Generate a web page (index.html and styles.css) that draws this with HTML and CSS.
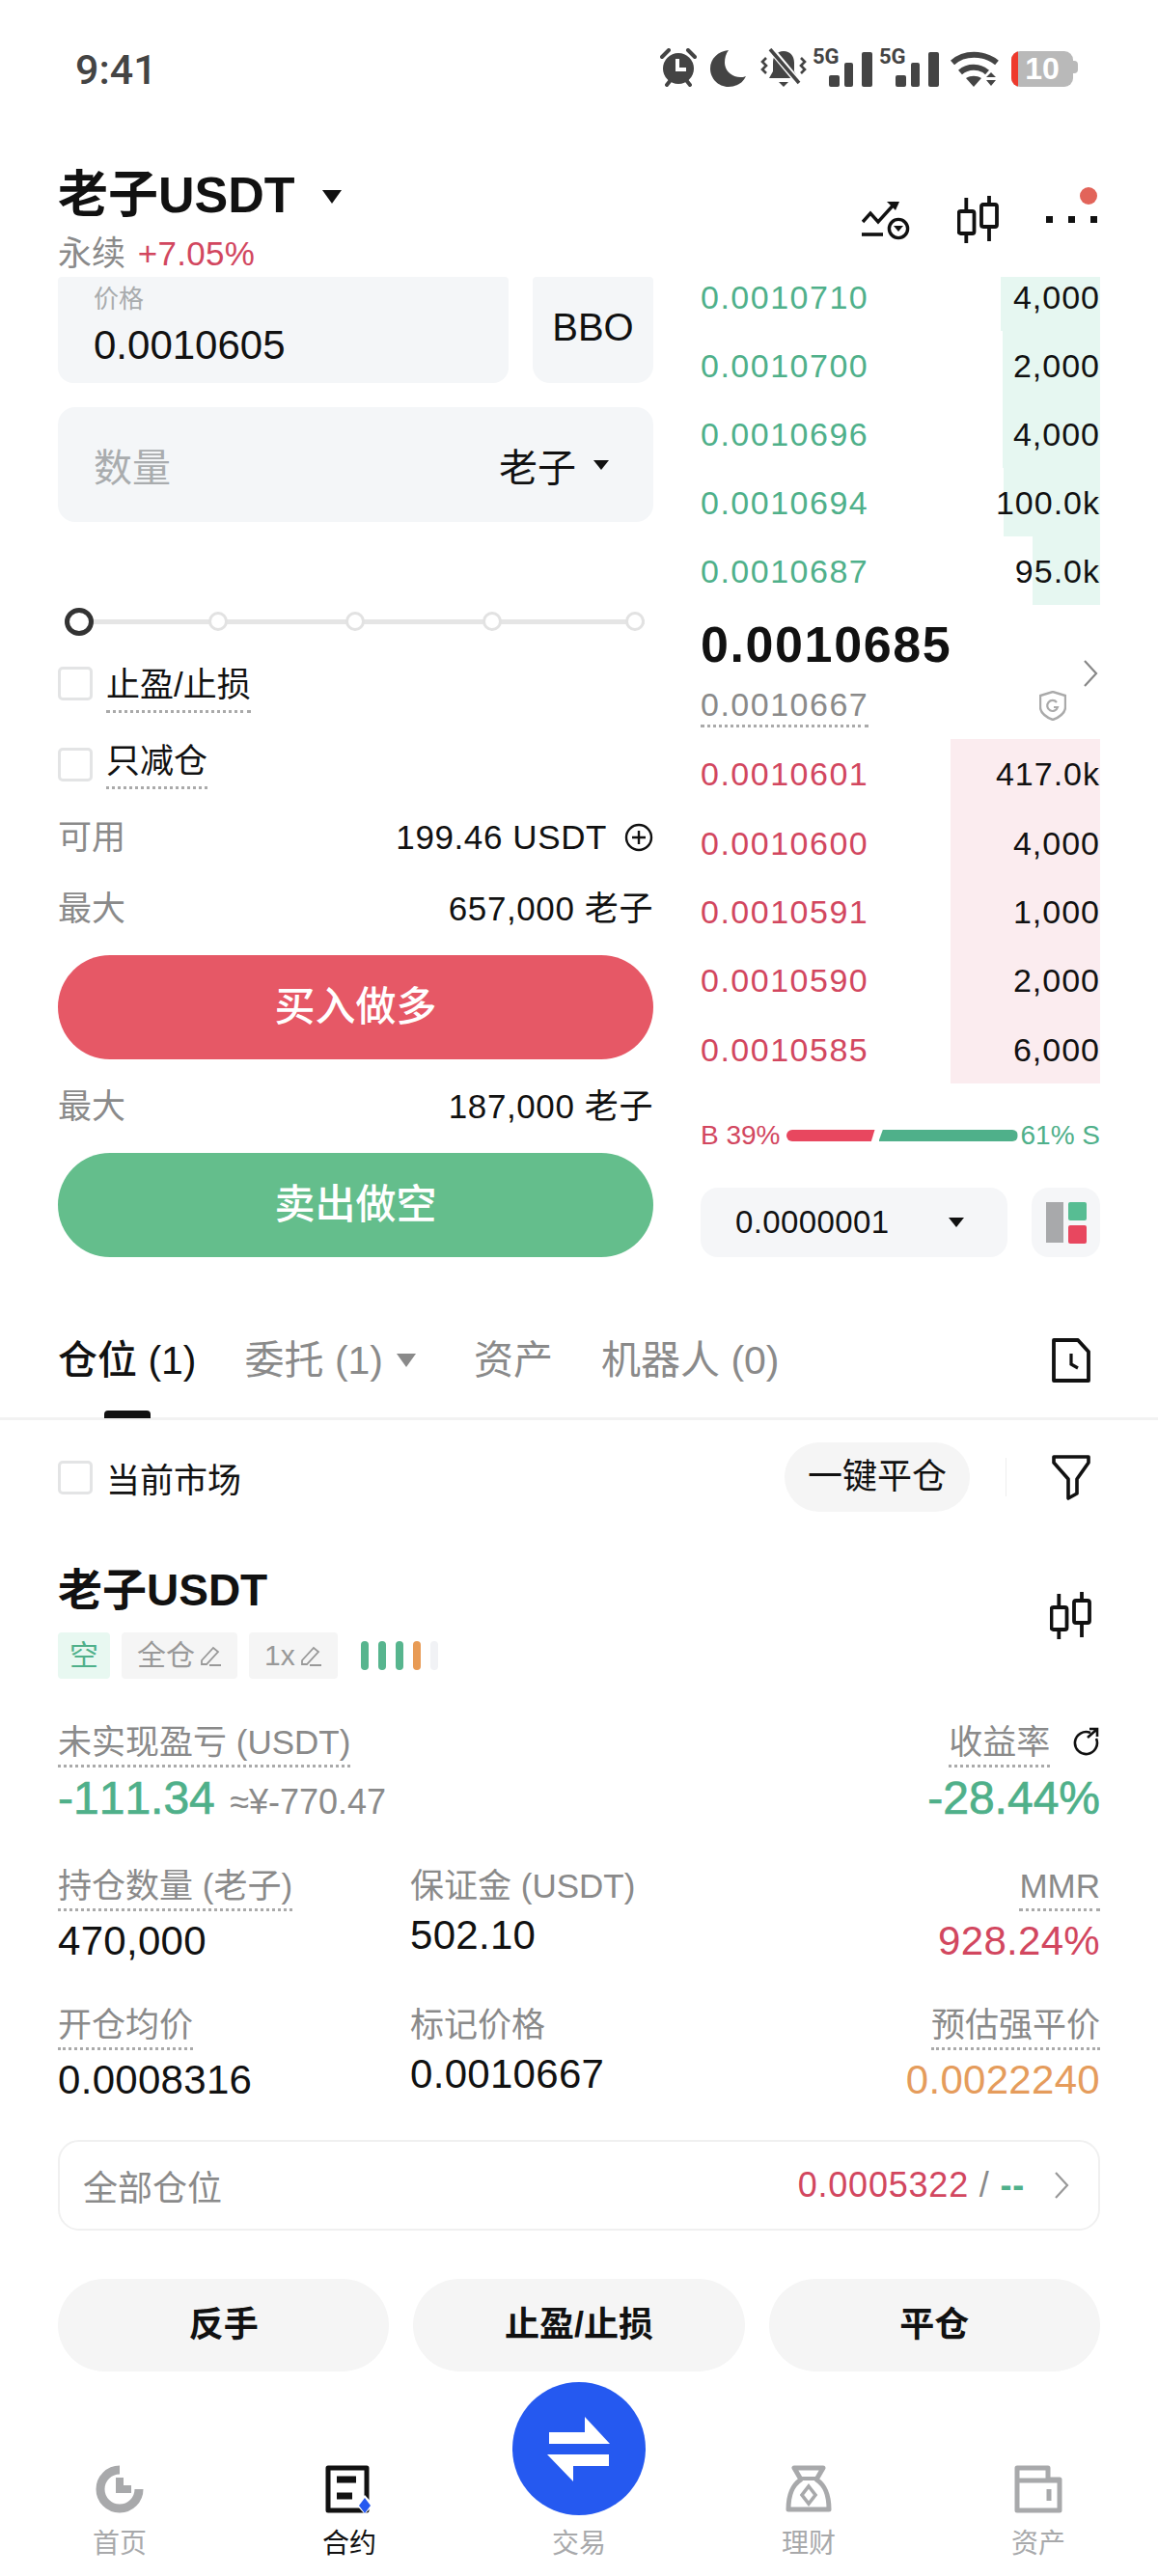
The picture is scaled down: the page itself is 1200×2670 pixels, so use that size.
FILE: index.html
```html
<!DOCTYPE html>
<html lang="zh">
  <head>
    <meta charset="UTF-8" />
    <meta name="viewport" content="width=device-width, initial-scale=1.0" />
    <title>老子USDT</title>
    <link rel="stylesheet" href="styles.css">
  </head>
  <body>
    <svg class="defs" width="0" height="0">
      <symbol id="candles" viewBox="0 0 44 50">
        <path d="M9.3 2V49M33 0V47" fill="none" stroke="#111" stroke-width="3.8" />
        <rect x="1.5" y="16" width="16" height="23" rx="2" fill="#fff" stroke="#111" stroke-width="3.8" />
        <rect x="25" y="9" width="16" height="23" rx="2" fill="#fff" stroke="#111" stroke-width="3.8" />
      </symbol>
      <symbol id="pencil" viewBox="0 0 24 24">
        <path d="M3 17 15 4l5 4-12 13H3zM11 22h12" fill="none" stroke="#999" stroke-width="1.8" />
      </symbol>
    </svg>

    <div class="status-bar">
      <span class="clock">9:41</span>
      <div class="status-icons">
        <svg width="38" height="40" viewBox="0 0 38 40">
          <circle cx="19" cy="21" r="16" fill="#444" />
          <path d="M2 9 9 2M36 9 29 2M7 38l4-5M31 38l-4-5" stroke="#444" stroke-width="4" stroke-linecap="round" />
          <path d="M18 11V22H27" fill="none" stroke="#fff" stroke-width="4" />
        </svg>
        <svg class="moon" width="38" height="38" viewBox="0 0 38 38">
          <path d="M19 0C8 1 0 9 0 19s8 19 19 19c8 0 15-4 18-11-2 1-4 1-6 1-9 0-16-7-16-15 0-5 1-9 4-13z" fill="#444" />
        </svg>
        <svg class="bell" width="50" height="40" viewBox="0 0 50 40">
          <path d="M25 3c-7 0-11 5-11 12v9l-4 7h30l-4-7v-9C36 8 32 3 25 3z" fill="#444" />
          <path d="M20 35h10l-5 5z" fill="#444" />
          <path d="M7 10 3 14l4 4-4 4 4 4M43 10l4 4-4 4 4 4-4 4" fill="none" stroke="#444" stroke-width="2.6" />
          <path d="M11 0 41 36" stroke="#fff" stroke-width="7" />
          <path d="M11 1 41 36" stroke="#444" stroke-width="3.6" />
        </svg>
        <svg class="signal" width="64" height="50" viewBox="0 -8 64 50">
          <text class="net-label" x="0" y="16">5G</text>
          <rect x="17" y="28" width="11" height="12" rx="2" fill="#444" />
          <rect x="33" y="15" width="9" height="25" rx="2" fill="#444" />
          <rect x="51" y="4" width="11" height="36" rx="2" fill="#444" />
        </svg>
        <svg class="signal" width="64" height="50" viewBox="0 -8 64 50">
          <text class="net-label" x="0" y="16">5G</text>
          <rect x="17" y="28" width="11" height="12" rx="2" fill="#444" />
          <rect x="33" y="15" width="9" height="25" rx="2" fill="#444" />
          <rect x="51" y="4" width="11" height="36" rx="2" fill="#444" />
        </svg>
        <svg class="wifi" width="50" height="38" viewBox="0 0 50 38">
          <path d="M2 13C14 2 34 2 48 13" fill="none" stroke="#444" stroke-width="6" />
          <path d="M10 23c8-7 20-7 28 0" fill="none" stroke="#444" stroke-width="6" />
          <path d="M16 29c5-3 11-3 16 0l-8 9z" fill="#444" />
          <path d="M37 28h10l-5-5zM37 31h10l-5 6z" fill="#444" />
        </svg>
        <div class="battery"><span class="battery-level"></span><span class="battery-text">10</span></div>
        <span class="battery-nub"></span>
      </div>
    </div>

    <div class="header">
      <div>
        <div class="pair-row">
          <h1 class="pair">老子USDT</h1>
          <span class="caret caret-lg"></span>
        </div>
        <div class="pair-sub">永续 <span class="red pair-change">+7.05%</span></div>
      </div>
      <div class="header-icons">
        <svg width="50" height="42" viewBox="0 0 50 42">
          <path d="M1 23 9 14l8 9L35 3" fill="none" stroke="#111" stroke-width="3.4" />
          <path d="M26 2H39L35 11z" fill="#111" />
          <path d="M0 36H22" stroke="#111" stroke-width="3.6" />
          <circle cx="38" cy="30" r="9.6" fill="none" stroke="#111" stroke-width="3.4" />
          <path d="M33 27H43L38 33z" fill="#111" />
        </svg>
        <svg class="header-candles" width="44" height="50"><use href="#candles" /></svg>
        <div class="more">
          <span class="more-dot"></span><span class="more-dot"></span><span class="more-dot"></span>
          <span class="notice"></span>
        </div>
      </div>
    </div>

    <div class="trade">
      <div class="order-form">
        <div class="price-row">
          <div class="price-box">
            <div class="price-label">价格</div>
            <div class="price-value">0.0010605</div>
          </div>
          <div class="bbo">BBO</div>
        </div>
        <div class="qty-box">
          <span class="qty-label">数量</span>
          <span class="qty-unit">老子<span class="caret caret-sm"></span></span>
        </div>

        <div class="slider">
          <span class="thumb"></span>
          <span class="stop"></span>
          <span class="stop"></span>
          <span class="stop"></span>
          <span class="stop stop-last"></span>
        </div>

        <div class="check-row">
          <span class="checkbox"></span>
          <span class="dotted">止盈/止损</span>
        </div>
        <div class="check-row check-row-2">
          <span class="checkbox"></span>
          <span class="dotted">只减仓</span>
        </div>

        <div class="info-row info-first">
          <span class="muted">可用</span>
          <span class="info-value">199.46 USDT
            <svg class="plus" width="30" height="30" viewBox="0 0 30 30">
              <circle cx="15" cy="15" r="13" fill="none" stroke="#111" stroke-width="2.4" />
              <path d="M8 15H22M15 8V22" stroke="#111" stroke-width="2.4" />
            </svg>
          </span>
        </div>
        <div class="info-row info-next">
          <span class="muted">最大</span>
          <span class="info-value">657,000 老子</span>
        </div>
        <div class="action action-buy">买入做多</div>
        <div class="info-row info-sell">
          <span class="muted">最大</span>
          <span class="info-value">187,000 老子</span>
        </div>
        <div class="action action-sell">卖出做空</div>
      </div>

      <div class="book">
        <div class="asks">
          <div class="book-row"><span class="depth depth-ask" style="width: 103px"></span><span class="green">0.0010710</span><span class="size">4,000</span></div>
          <div class="book-row"><span class="depth depth-ask" style="width: 101px"></span><span class="green">0.0010700</span><span class="size">2,000</span></div>
          <div class="book-row"><span class="depth depth-ask" style="width: 101px"></span><span class="green">0.0010696</span><span class="size">4,000</span></div>
          <div class="book-row"><span class="depth depth-ask" style="width: 100px"></span><span class="green">0.0010694</span><span class="size">100.0k</span></div>
          <div class="book-row"><span class="depth depth-ask" style="width: 70px"></span><span class="green">0.0010687</span><span class="size">95.0k</span></div>
        </div>

        <div class="mid">
          <div>
            <div class="mid-price">0.0010685</div>
            <div class="mark-price"><span class="mark-dotted">0.0010667</span></div>
          </div>
          <div class="mid-icons">
            <svg class="mid-chevron" width="16" height="28" viewBox="0 0 16 28">
              <path d="M2 1 14 14 2 27" fill="none" stroke="#888" stroke-width="2.2" />
            </svg>
            <svg class="shield" width="28" height="31" viewBox="0 0 28 31">
              <path d="M14 1 27 5V17C27 23 20 28 14 30 8 28 1 23 1 17V5z" fill="none" stroke="#aaa" stroke-width="2.4" />
              <path d="M18 12a5.500 5.500 0 1 0 1 5h-4" fill="none" stroke="#aaa" stroke-width="2.2" />
            </svg>
          </div>
        </div>

        <div class="bids">
          <div class="book-row"><span class="depth depth-bid" style="width: 155px"></span><span class="red">0.0010601</span><span class="size">417.0k</span></div>
          <div class="book-row"><span class="depth depth-bid" style="width: 155px"></span><span class="red">0.0010600</span><span class="size">4,000</span></div>
          <div class="book-row"><span class="depth depth-bid" style="width: 155px"></span><span class="red">0.0010591</span><span class="size">1,000</span></div>
          <div class="book-row"><span class="depth depth-bid" style="width: 155px"></span><span class="red">0.0010590</span><span class="size">2,000</span></div>
          <div class="book-row"><span class="depth depth-bid" style="width: 155px"></span><span class="red">0.0010585</span><span class="size">6,000</span></div>
        </div>

        <div class="ratio">
          <span class="red">B 39%</span>
          <span class="ratio-bar ratio-buy"></span>
          <span class="ratio-bar ratio-sell"></span>
          <span class="green ratio-end">61% S</span>
        </div>

        <div class="tick-row">
          <div class="tick-select">0.0000001<span class="caret caret-sm"></span></div>
          <div class="layout-btn">
            <span class="layout-grey"></span>
            <span class="layout-stack"><span class="layout-green"></span><span class="layout-red"></span></span>
          </div>
        </div>
      </div>
    </div>

    <div class="tabs">
      <div class="tab tab-active">仓位 (1)<span class="tab-ink"></span></div>
      <div class="tab">委托 (1)<span class="caret caret-tab"></span></div>
      <div class="tab">资产</div>
      <div class="tab">机器人 (0)</div>
      <svg class="tab-icon" width="40" height="46" viewBox="0 0 40 46">
        <path d="M2 2H27L38 14V44H2z" fill="none" stroke="#111" stroke-width="3.8" stroke-linejoin="round" />
        <path d="M20 16V27L27 31" fill="none" stroke="#111" stroke-width="3.2" />
      </svg>
    </div>

    <div class="filter-row">
      <span class="checkbox"></span>
      <span class="filter-label">当前市场</span>
      <div class="close-all">一键平仓</div>
      <span class="filter-sep"></span>
      <svg width="40" height="47" viewBox="0 0 40 47">
        <path d="M2 2H38V8L26 25V40L17 45V25L2 8z" fill="none" stroke="#111" stroke-width="3.6" stroke-linejoin="round" />
      </svg>
    </div>

    <div class="position">
      <div class="pos-head">
        <div>
          <div class="pos-title">老子USDT</div>
          <div class="tags">
            <span class="tag tag-side">空</span>
            <span class="tag">全仓<svg class="tag-pencil" width="24" height="24"><use href="#pencil" /></svg></span>
            <span class="tag">1x<svg class="tag-pencil" width="24" height="24"><use href="#pencil" /></svg></span>
            <span class="risk">
              <span class="risk-bar"></span>
              <span class="risk-bar"></span>
              <span class="risk-bar"></span>
              <span class="risk-bar risk-warn"></span>
              <span class="risk-bar risk-off"></span>
            </span>
          </div>
        </div>
        <svg class="pos-candles" width="44" height="50"><use href="#candles" /></svg>
      </div>

      <div class="stats">
        <div class="stat stat-wide">
          <div class="stat-label"><span class="dotted">未实现盈亏 (USDT)</span></div>
          <div class="stat-value stat-big green">-111.34 <span class="stat-approx">≈¥-770.47</span></div>
        </div>
        <div class="stat stat-right">
          <div class="stat-label">
            <span class="dotted">收益率</span>
            <svg class="refresh" width="28" height="30" viewBox="0 0 28 30">
              <path d="M18 6A11.500 11.500 0 1 0 24 12" fill="none" stroke="#111" stroke-width="2.6" />
              <path d="M15 11 24 3M17 2H25V10" fill="none" stroke="#111" stroke-width="2.6" />
            </svg>
          </div>
          <div class="stat-value stat-big green">-28.44%</div>
        </div>

        <div class="stat">
          <div class="stat-label"><span class="dotted">持仓数量 (老子)</span></div>
          <div class="stat-value">470,000</div>
        </div>
        <div class="stat">
          <div class="stat-label">保证金 (USDT)</div>
          <div class="stat-value">502.10</div>
        </div>
        <div class="stat stat-right">
          <div class="stat-label"><span class="dotted">MMR</span></div>
          <div class="stat-value red">928.24%</div>
        </div>

        <div class="stat">
          <div class="stat-label"><span class="dotted">开仓均价</span></div>
          <div class="stat-value">0.0008316</div>
        </div>
        <div class="stat">
          <div class="stat-label">标记价格</div>
          <div class="stat-value">0.0010667</div>
        </div>
        <div class="stat stat-right">
          <div class="stat-label"><span class="dotted">预估强平价</span></div>
          <div class="stat-value orange">0.0022240</div>
        </div>
      </div>

      <div class="all-pos">
        <span class="muted">全部仓位</span>
        <span class="all-pos-right">
          <span class="red">0.0005322</span><span class="muted"> / </span><span class="green all-pos-dash">--</span>
          <svg class="all-pos-chevron" width="16" height="28" viewBox="0 0 16 28">
            <path d="M2 1 14 14 2 27" fill="none" stroke="#999" stroke-width="2.2" />
          </svg>
        </span>
      </div>

      <div class="pos-actions">
        <div class="pos-btn">反手</div>
        <div class="pos-btn">止盈/止损</div>
        <div class="pos-btn">平仓</div>
      </div>
    </div>

    <div class="nav">
      <div class="nav-item">
        <svg class="nav-icon" width="50" height="50" viewBox="0 0 50 50">
          <path d="M25 5A20 20 0 1 0 45 25" fill="none" stroke="#a8a9ab" stroke-width="9" />
          <path d="M25 13V25H37" fill="none" stroke="#a8a9ab" stroke-width="8" />
        </svg>
        <span class="nav-label">首页</span>
      </div>
      <div class="nav-item nav-active">
        <svg class="nav-icon" width="50" height="50" viewBox="0 0 50 50">
          <path d="M3 3H43V47H3z" fill="none" stroke="#111" stroke-width="5" stroke-linejoin="round" />
          <path d="M12 15H32M12 32H28" stroke="#111" stroke-width="7" />
          <path d="M41 31 50 41 41 51 32 41z" fill="#fff" />
          <path d="M41 34 47 42 41 50 35 42z" fill="#2559f0" />
        </svg>
        <span class="nav-label">合约</span>
      </div>
      <div class="nav-item">
        <div class="fab">
          <svg width="138" height="138" viewBox="0 0 138 138">
            <path d="M38 52H75V36L101 64H38z" fill="#fff" />
            <path d="M36 75H100V87H63V103z" fill="#fff" />
          </svg>
        </div>
        <span class="nav-label">交易</span>
      </div>
      <div class="nav-item">
        <svg class="nav-icon" width="50" height="50" viewBox="0 0 50 50">
          <path d="M10 3H40L33 15C42 21 46 30 46 46H4C4 30 8 21 17 15z" fill="none" stroke="#a8a9ab" stroke-width="5" stroke-linejoin="round" />
          <path d="M15 14H35" stroke="#a8a9ab" stroke-width="4" />
          <path d="M25 22 32 31 25 40 18 31z" fill="none" stroke="#a8a9ab" stroke-width="3.6" />
        </svg>
        <span class="nav-label">理财</span>
      </div>
      <div class="nav-item">
        <svg class="nav-icon" width="50" height="50" viewBox="0 0 50 50">
          <path d="M3 47V3H35V15H47V47z" fill="none" stroke="#a8a9ab" stroke-width="5" stroke-linejoin="round" />
          <path d="M3 16H47" stroke="#a8a9ab" stroke-width="5" />
          <path d="M36 25V37" stroke="#a8a9ab" stroke-width="5" />
        </svg>
        <span class="nav-label">资产</span>
      </div>
    </div>
  </body>
</html>
```

FILE: styles.css
```css
* {
  box-sizing: border-box;
}

body {
  margin: 0;
  width: 1200px;
  height: 2670px;
  overflow: hidden;
  background: #fff;
  color: #111;
  font-family: "Liberation Sans", "Noto Sans CJK SC", sans-serif;
}

.defs {
  display: block;
  height: 0;
}

.red {
  color: #d2475f;
}

.green {
  color: #4fb08a;
}

.orange {
  color: #e59c5c;
}

.muted {
  color: #8a8a8a;
}

.caret {
  display: inline-block;
  width: 0;
  height: 0;
  border-left: 10px solid transparent;
  border-right: 10px solid transparent;
  border-top: 14px solid #111;
}

.caret-sm {
  border-left-width: 8px;
  border-right-width: 8px;
  border-top-width: 10px;
}

.dotted {
  display: inline-block;
  padding-bottom: 3px;
  border-bottom: 3px dotted #aaa;
}

/* status bar */
.status-bar {
  height: 170px;
  padding: 50px 60px 0 78px;
  display: flex;
  justify-content: space-between;
  align-items: flex-start;
}

.clock {
  font-family: "Roboto", sans-serif;
  font-size: 43px;
  font-weight: 500;
  line-height: 44px;
  color: #444;
}

.status-icons {
  display: flex;
  align-items: flex-start;
  margin-right: 23px;
}

.moon {
  margin: 2px 0 0 14px;
}

.bell {
  margin: 0 0 0 13px;
}

.signal {
  margin: -8px 0 0 5px;
}

.wifi {
  margin: 2px 0 0 10px;
}

.net-label {
  font-family: "Roboto", sans-serif;
  font-weight: 700;
  font-size: 22px;
  fill: #444;
}

.battery {
  position: relative;
  margin: 3px 0 0 13px;
  width: 64px;
  height: 37px;
  border-radius: 9px;
  background: #b9b9b9;
  overflow: hidden;
  text-align: center;
  color: #fff;
  font-size: 32px;
  font-weight: 700;
  line-height: 37px;
}

.battery-nub {
  margin-top: 13px;
  width: 5px;
  height: 13px;
  border-radius: 0 4px 4px 0;
  background: #b9b9b9;
}

.battery-level {
  position: absolute;
  left: 0;
  top: 0;
  bottom: 0;
  width: 7px;
  background: #ee3a2d;
}

/* header */
.header {
  height: 117px;
  padding: 0 60px;
  display: flex;
  justify-content: space-between;
}

.pair-row {
  height: 64px;
  display: flex;
  align-items: center;
}

.pair {
  margin: 0;
  font-size: 52px;
  font-weight: 700;
  line-height: 64px;
}

.caret-lg {
  margin: 4px 0 0 28px;
}

.pair-sub {
  margin-top: 11px;
  font-size: 35px;
  line-height: 36px;
  color: #8a8a8a;
}

.pair-change {
  margin-left: 3px;
  letter-spacing: 0.3px;
}

.header-icons {
  display: flex;
  align-items: flex-start;
  padding-top: 33px;
  margin-right: 3px;
}

.header-icons svg:first-child {
  margin-top: 4px;
}

.header-candles {
  margin-left: 49px;
}

.more {
  position: relative;
  display: flex;
  gap: 16px;
  margin-left: 48px;
  padding-top: 21px;
}

.more-dot {
  width: 7px;
  height: 7px;
  background: #111;
}

.notice {
  position: absolute;
  right: 0;
  top: -9px;
  width: 18px;
  height: 18px;
  border-radius: 50%;
  background: #e2645a;
}

/* trade area */
.trade {
  display: flex;
  gap: 49px;
  padding: 0 60px;
}

.order-form {
  width: 617px;
}

.price-row {
  display: flex;
  gap: 25px;
  height: 110px;
}

.price-box {
  width: 467px;
  padding: 6px 37px 0;
  background: #f4f6f8;
  border-radius: 4px 4px 16px 16px;
}

.price-label {
  font-size: 26px;
  line-height: 34px;
  color: #a9acae;
}

.price-value {
  margin-top: 7px;
  font-size: 42px;
  line-height: 48px;
}

.bbo {
  flex: 1;
  background: #f4f6f8;
  border-radius: 4px 4px 18px 18px;
  text-align: center;
  font-size: 40px;
  line-height: 104px;
}

.qty-box {
  margin-top: 25px;
  height: 119px;
  padding: 0 46px 0 37px;
  background: #f4f6f8;
  border-radius: 18px;
  display: flex;
  justify-content: space-between;
  align-items: center;
  font-size: 40px;
}

.qty-label {
  color: #a9acae;
}

.qty-unit {
  display: flex;
  align-items: center;
}

.qty-unit .caret {
  margin-left: 18px;
}

.slider {
  margin-top: 88px;
  height: 30px;
  padding: 0 9px 0 7px;
  display: flex;
  gap: 122px;
  align-items: center;
  background: linear-gradient(#e5e5e5, #e5e5e5) center / 100% 5px no-repeat;
  background-origin: content-box;
}

.thumb {
  flex: none;
  width: 30px;
  height: 29px;
  margin-right: -3px;
  border: 5px solid #333;
  border-radius: 50%;
  background: #fff;
}

.stop {
  flex: none;
  width: 20px;
  height: 20px;
  border: 3px solid #e2e2e2;
  border-radius: 50%;
  background: #fff;
}

.stop-last {
  margin-left: 6px;
}

.check-row {
  margin-top: 31px;
  display: flex;
  gap: 14px;
  font-size: 35px;
  line-height: 40px;
}

.check-row .dotted {
  padding-bottom: 6px;
}

.check-row-2 {
  margin-top: 30px;
}

.checkbox {
  flex: none;
  margin-top: 1px;
  width: 36px;
  height: 35px;
  border: 3px solid #e3e4e5;
  border-radius: 5px;
}

.check-row-2 .checkbox {
  margin-top: 6px;
}

.info-row {
  display: flex;
  justify-content: space-between;
  font-size: 35px;
  line-height: 40px;
}

.info-first {
  margin-top: 30px;
}

.info-next {
  margin-top: 34px;
}

.info-sell {
  margin-top: 29px;
}

.info-value {
  display: flex;
  align-items: center;
  gap: 18px;
  letter-spacing: 0.6px;
}

.action {
  margin-top: 28px;
  height: 108px;
  border-radius: 54px;
  color: #fff;
  text-align: center;
  font-size: 42px;
  font-weight: 500;
  line-height: 108px;
}

.action-buy {
  background: #e65866;
}

.action-sell {
  background: #64be8c;
}

/* order book */
.book {
  flex: 1;
  font-size: 34px;
  letter-spacing: 1.5px;
}

.asks {
  height: 340px;
  overflow: hidden;
  display: flex;
  flex-direction: column;
  justify-content: flex-end;
}

.bids {
  height: 357px;
}

.book-row {
  position: relative;
  flex: none;
  height: 71px;
  padding-top: 2px;
  display: flex;
  justify-content: space-between;
  align-items: center;
}

.bids .book-row {
  height: 71.4px;
}

.book-row span {
  position: relative;
}

.book-row .depth {
  position: absolute;
  top: 0;
  right: 0;
  bottom: 0;
}

.depth-ask {
  background: #e6f7f1;
}

.depth-bid {
  background: #fbecef;
}

.size {
  letter-spacing: 1px;
}

.mid {
  height: 139px;
  display: flex;
  justify-content: space-between;
}

.mid-price {
  margin-top: 16px;
  font-size: 52px;
  font-weight: 700;
  line-height: 50px;
  letter-spacing: 1.6px;
}

.mark-price {
  margin-top: 19px;
  color: #8a8a8a;
  line-height: 36px;
}

.mark-dotted {
  display: inline-block;
  padding-bottom: 3px;
  border-bottom: 3px dotted #aaa;
}

.mid-icons {
  padding-top: 57px;
  display: flex;
  flex-direction: column;
  align-items: flex-end;
}

.mid-chevron {
  margin-right: 2px;
}

.shield {
  margin: 4px 35px 0 0;
}

.ratio {
  margin-top: 39px;
  height: 30px;
  display: flex;
  align-items: center;
  font-size: 28px;
  line-height: 30px;
  letter-spacing: 0;
  white-space: nowrap;
}

.ratio-bar {
  height: 12px;
}

.ratio-buy {
  width: 92px;
  margin-left: 6px;
  background: #e8475f;
  border-radius: 6px 0 0 6px;
  clip-path: polygon(0 0, 100% 0, 96% 100%, 0 100%);
}

.ratio-sell {
  width: 144px;
  margin-left: 4px;
  background: #4fb08a;
  border-radius: 0 6px 6px 0;
  clip-path: polygon(3% 0, 100% 0, 100% 100%, 0 100%);
}

.ratio-end {
  margin-left: auto;
}

.tick-row {
  margin-top: 39px;
  height: 72px;
  display: flex;
  gap: 25px;
}

.tick-select {
  width: 318px;
  padding: 0 45px 0 36px;
  background: #f5f6f8;
  border-radius: 18px;
  display: flex;
  justify-content: space-between;
  align-items: center;
  font-size: 33px;
  letter-spacing: 0.4px;
}

.layout-btn {
  flex: 1;
  background: #f5f6f8;
  border-radius: 18px;
  display: flex;
  justify-content: center;
  align-items: center;
  gap: 5px;
}

.layout-grey {
  width: 18px;
  height: 42px;
  background: #a8a9ab;
}

.layout-stack {
  display: flex;
  flex-direction: column;
  gap: 5px;
}

.layout-green,
.layout-red {
  width: 19px;
  height: 19px;
  background: #57bd93;
  border-radius: 2px;
}

.layout-red {
  background: #e8475f;
}

/* tabs */
.tabs {
  height: 169px;
  padding: 87px 70px 0 60px;
  border-bottom: 3px solid #f2f2f2;
  display: flex;
  gap: 50px;
  font-size: 41px;
  line-height: 40px;
  color: #8a8a8a;
}

.tab {
  position: relative;
  display: flex;
  white-space: pre;
}

.tab-active {
  color: #111;
  font-weight: 500;
}

.tab-ink {
  position: absolute;
  left: 48px;
  top: 72px;
  width: 48px;
  height: 8px;
  border-radius: 4px 4px 0 0;
  background: #111;
}

.caret-tab {
  margin: 13px 10px 0 14px;
  border-top-color: #8a8a8a;
}

.tab-icon {
  margin-left: auto;
  margin-top: -3px;
}

.filter-row {
  margin-top: 23px;
  height: 72px;
  padding: 0 70px 0 60px;
  display: flex;
  align-items: center;
  font-size: 35px;
}

.filter-row .checkbox {
  margin-top: 0;
}

.filter-label {
  margin-left: 14px;
}

.close-all {
  margin-left: auto;
  width: 192px;
  height: 72px;
  border-radius: 36px;
  background: #f5f5f5;
  text-align: center;
  font-size: 36px;
  line-height: 72px;
}

.filter-sep {
  margin: 0 47px 0 37px;
  width: 1px;
  height: 40px;
  background: #eee;
}

/* position card */
.position {
  padding: 51px 60px 0;
}

.pos-head {
  display: flex;
  justify-content: space-between;
}

.pos-title {
  font-size: 46px;
  font-weight: 700;
  line-height: 60px;
}

.pos-candles {
  margin: 32px 8px 0 0;
}

.tags {
  margin-top: 14px;
  height: 48px;
  display: flex;
  gap: 12px;
  font-size: 30px;
  line-height: 48px;
  color: #999;
}

.tag {
  display: flex;
  align-items: center;
  gap: 4px;
  padding: 0 16px;
  background: #f5f5f5;
  border-radius: 4px;
}

.tag-side {
  background: #e8f8f1;
  color: #4fb08a;
  padding: 0 12px;
}

.risk {
  display: flex;
  align-items: center;
  gap: 10px;
  margin-left: 12px;
}

.risk-bar {
  width: 8px;
  height: 30px;
  border-radius: 4px;
  background: #57b58e;
}

.risk-warn {
  background: #e89b55;
}

.risk-off {
  background: #f1f2f5;
}

.stats {
  margin-top: 46px;
  display: grid;
  grid-template-columns: 365px 1fr auto;
  row-gap: 44px;
}

.stat-wide {
  grid-column: span 2;
}

.stat-right {
  text-align: right;
}

.stat-label {
  font-size: 35px;
  line-height: 40px;
  color: #8a8a8a;
}

.stat-label .dotted {
  vertical-align: top;
}

.stat-value {
  margin-top: 8px;
  font-size: 42px;
  line-height: 46px;
  letter-spacing: 0.3px;
  font-kerning: none;
}

.stat-big {
  margin-top: 9px;
  font-size: 48px;
  line-height: 46px;
  letter-spacing: 0;
  -webkit-text-stroke: 0.7px currentColor;
}

.stat-approx {
  margin-left: 2px;
  font-size: 36px;
  color: #8a8a8a;
  -webkit-text-stroke: 0;
}

.refresh {
  margin-left: 14px;
  vertical-align: top;
  margin-top: 4px;
}

.all-pos {
  margin-top: 39px;
  height: 94px;
  padding: 0 30px 0 24px;
  border: 2px solid #f0f0f0;
  border-radius: 22px;
  display: flex;
  justify-content: space-between;
  align-items: center;
  font-size: 36px;
}

.all-pos-right {
  display: flex;
  align-items: center;
  white-space: pre;
  letter-spacing: 0.8px;
}

.all-pos-dash {
  font-weight: 700;
}

.all-pos-chevron {
  margin-left: 30px;
}

.pos-actions {
  margin-top: 50px;
  display: flex;
  gap: 25px;
}

.pos-btn {
  flex: 1;
  height: 96px;
  border-radius: 48px;
  background: #f5f5f5;
  text-align: center;
  font-size: 36px;
  font-weight: 700;
  line-height: 96px;
}

/* bottom nav */
.nav {
  height: 217px;
  padding: 0 5px 20px;
  display: flex;
  align-items: flex-end;
}

.nav-item {
  flex: 1;
  display: flex;
  flex-direction: column;
  align-items: center;
}

.nav-icon {
  margin-bottom: 14px;
}

.nav-label {
  font-size: 28px;
  line-height: 36px;
  color: #a8a9ab;
}

.nav-active .nav-label {
  color: #111;
}

.fab {
  width: 138px;
  height: 138px;
  margin-bottom: 12px;
  border-radius: 50%;
  background: #2559f0;
}
```
